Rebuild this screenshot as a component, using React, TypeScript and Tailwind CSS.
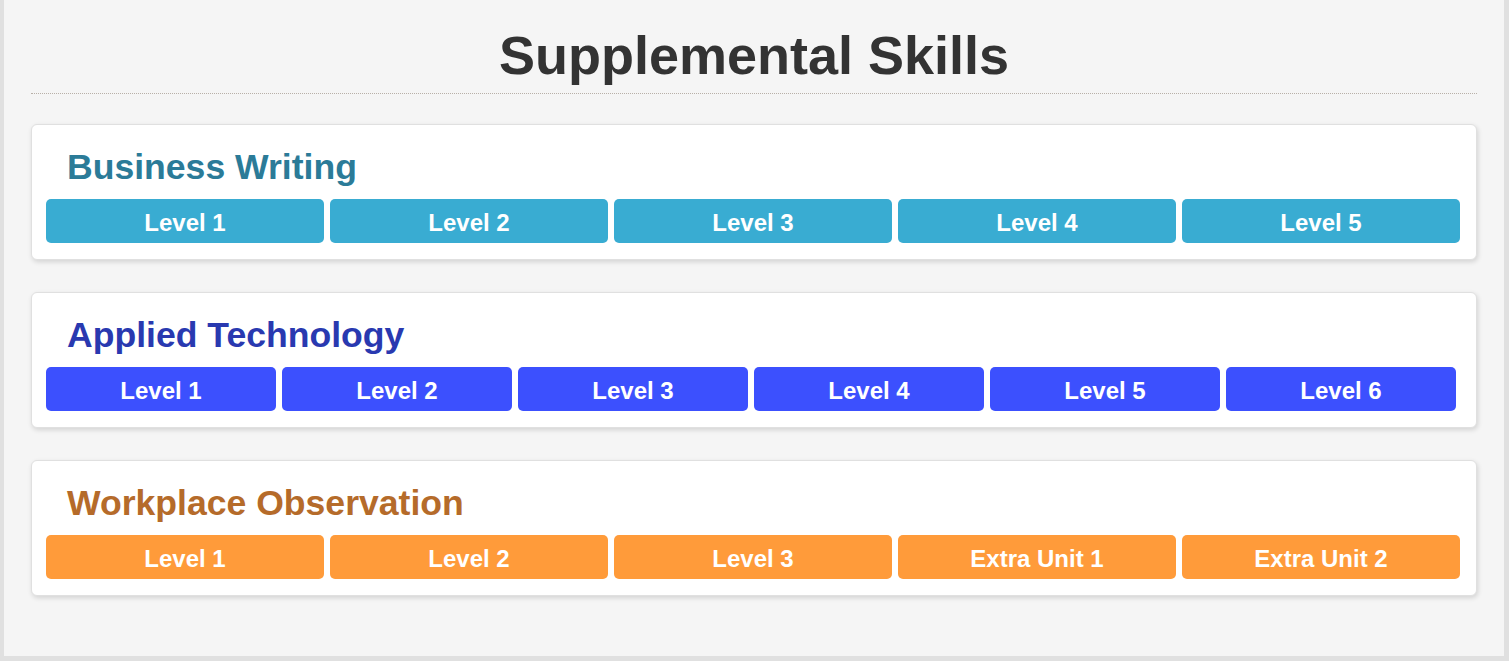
import React from 'react';

type Skill = {
  title: string;
  titleColor: string;
  btnColor: string;
  btnWidth: string;
  levels: string[];
};

const SKILLS: Skill[] = [
  {
    title: 'Business Writing',
    titleColor: 'text-[#2b7b98]',
    btnColor: 'bg-[#39acd2]',
    btnWidth: 'w-[278px]',
    levels: ['Level 1', 'Level 2', 'Level 3', 'Level 4', 'Level 5'],
  },
  {
    title: 'Applied Technology',
    titleColor: 'text-[#2939b0]',
    btnColor: 'bg-[#3c50fe]',
    btnWidth: 'w-[230px]',
    levels: ['Level 1', 'Level 2', 'Level 3', 'Level 4', 'Level 5', 'Level 6'],
  },
  {
    title: 'Workplace Observation',
    titleColor: 'text-[#b56b2a]',
    btnColor: 'bg-[#ff9b3a]',
    btnWidth: 'w-[278px]',
    levels: ['Level 1', 'Level 2', 'Level 3', 'Extra Unit 1', 'Extra Unit 2'],
  },
];

export default function App() {
  return (
    <div className="min-h-[661px] bg-[#e0e0e0] pl-[4px] pr-[5px] pb-[5px] font-['Liberation_Sans',Arial,sans-serif]">
      <div className="bg-[#f5f5f5] h-[656px] px-[27px]">
        {/* Header */}
        <div className="pt-[24px] pb-[7px] border-b border-dotted border-[#b8b0a8]">
          <h1 className="text-center text-[54px] leading-[62px] font-bold text-[#333333]">
            Supplemental Skills
          </h1>
        </div>

        {/* Skill cards */}
        <div className="flex flex-col gap-[32px] mt-[30px]">
          {SKILLS.map((skill) => (
            <div
              key={skill.title}
              className="bg-white border border-[#e0e0e0] rounded-[6px] shadow-[1px_2px_5px_rgba(0,0,0,0.14)] pt-[22px] pb-[16px] px-[14px]"
            >
              <h2 className={`text-[35.6px] leading-[40px] font-bold pl-[21px] ${skill.titleColor}`}>
                {skill.title}
              </h2>
              <div className="flex gap-[6px] mt-[12px]">
                {skill.levels.map((lvl) => (
                  <div
                    key={lvl}
                    className={`${skill.btnWidth} ${skill.btnColor} h-[44px] pt-[3px] rounded-[5px] flex items-center justify-center text-white text-[24px] font-bold`}
                  >
                    {lvl}
                  </div>
                ))}
              </div>
            </div>
          ))}
        </div>
      </div>
    </div>
  );
}
